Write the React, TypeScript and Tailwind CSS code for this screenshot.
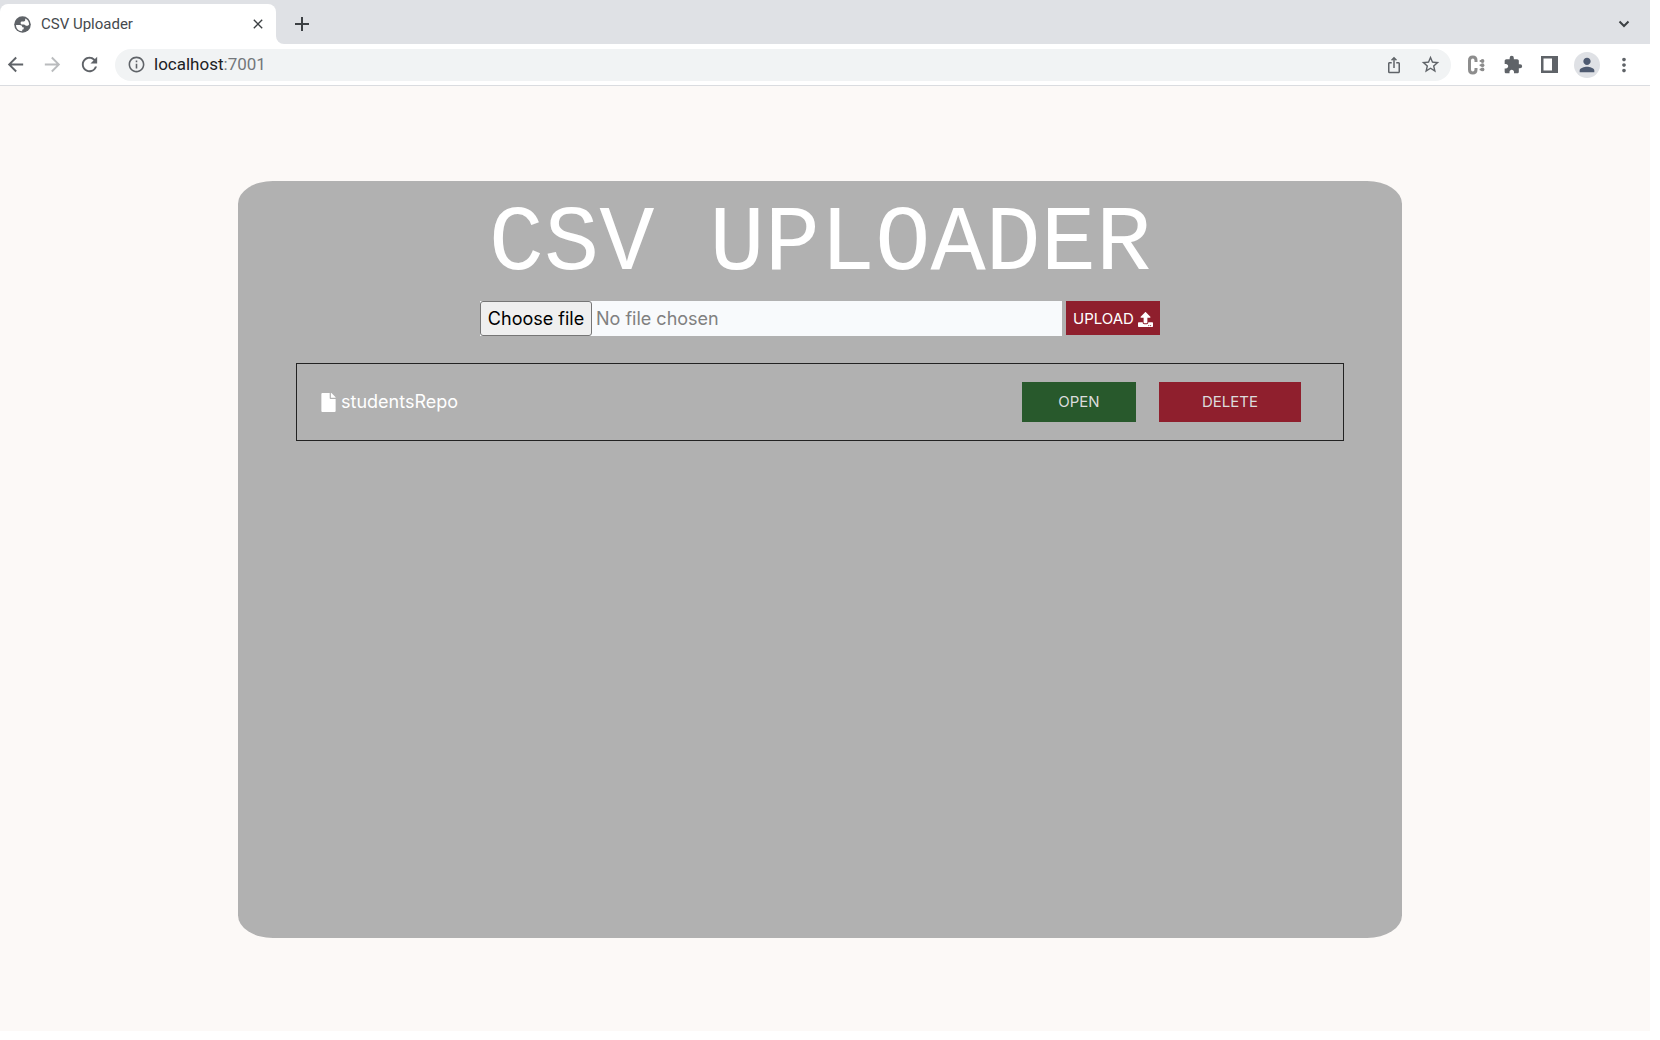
import React from "react";
import { MdClose, MdAdd, MdArrowBack, MdArrowForward, MdRefresh, MdInfoOutline, MdIosShare, MdStarOutline, MdExtension, MdPerson, MdMoreVert } from "react-icons/md";
import { FaUpload, FaFile } from "react-icons/fa";

function GlobeIcon() {
  return (
    <svg width="17" height="17" viewBox="0 0 17 17" aria-hidden="true">
      <circle cx="8.500" cy="8.500" r="8.300" fill="#5f6368" />
      <path d="M2 9h3.600c1.700 0 2.700.9 2.700 2.200h1.400v1.300c0 .8-.6 1.200-1.500 1.200v1.500C4.600 15.200 2 12.500 2 9z" fill="#fff" />
      <path d="M11.200 2.600c2.400 1 3.900 3.200 3.900 5.800-.5.900-1.300 1.400-2.300 1.400-1.400 0-1.700-1.400-3-1.400H8.100c-1 0-1.500-.7-1.500-1.500 0-.9.8-1.400 1.700-1.400h1.500c.9 0 1.400-.6 1.400-1.400z" fill="#fff" />
    </svg>
  );
}

function ColonIcon() {
  return (
    <svg width="18" height="20" viewBox="0 0 18 20" aria-hidden="true">
      <path d="M9 7V5.500C9 3 7.800 2 5.800 2S2.500 3 2.500 5.500v9c0 2.500 1.300 3.500 3.300 3.500S9 17 9 14.500V13" fill="none" stroke="#8d8d8d" strokeWidth="3" />
      <g fill="#8d8d8d">
        <circle cx="13.500" cy="6" r="1" />
        <circle cx="13.500" cy="10.200" r="1" />
        <circle cx="13.500" cy="14.400" r="1" />
        <circle cx="15.500" cy="6" r="1.900" />
        <circle cx="15.500" cy="10.200" r="1.900" />
        <circle cx="15.500" cy="14.400" r="1.900" />
      </g>
    </svg>
  );
}

function SidePanelIcon() {
  return (
    <svg width="17" height="17" viewBox="0 0 17 17" aria-hidden="true">
      <path fillRule="evenodd" d="M0 0h17v17H0zM2.500 2.500v12h8.500v-12z" fill="#5f6368" />
    </svg>
  );
}

function ChevronIcon() {
  return (
    <svg width="12" height="8" viewBox="0 0 12 8" aria-hidden="true">
      <path d="M1.500 1.500 6 6l4.500-4.500" fill="none" stroke="#3c4043" strokeWidth="2" />
    </svg>
  );
}

function ToolButton({ label, children }: { label: string; children: React.ReactNode }) {
  return (
    <button type="button" aria-label={label} className="flex w-[37px] items-center justify-center">
      {children}
    </button>
  );
}

function TabStrip() {
  return (
    <div className="flex h-11 bg-[#dfe1e5]">
      <div className="mt-1 flex w-[276px] items-center rounded-t-lg bg-white pr-2.5 pl-3.5">
        <GlobeIcon />
        <span className="ml-2.5 flex-1 font-['Roboto',sans-serif] text-[15px] text-[#45494d]">CSV Uploader</span>
        <button type="button" aria-label="Close tab" className="text-[#3c4043]">
          <MdClose size={16} />
        </button>
      </div>
      <div className="flex-1 bg-white">
        <div className="flex h-full items-center justify-between rounded-bl-lg bg-[#dfe1e5] pr-5 pl-3.5">
          <button type="button" aria-label="New tab" className="mt-1 text-[#3c4043]">
            <MdAdd size={24} />
          </button>
          <button type="button" aria-label="Search tabs" className="mt-1">
            <ChevronIcon />
          </button>
        </div>
      </div>
    </div>
  );
}

function Toolbar() {
  return (
    <div className="flex h-[42px] items-center border-b border-[#dadce0] bg-white pr-2 text-[#5f6368]">
      <div className="flex items-center gap-3.5 pl-1">
        <button type="button" aria-label="Back"><MdArrowBack size={23} /></button>
        <button type="button" aria-label="Forward" className="text-[#babcbe]"><MdArrowForward size={23} /></button>
        <button type="button" aria-label="Reload"><MdRefresh size={23} /></button>
      </div>
      <div className="ml-3.5 flex h-8 flex-1 items-center rounded-full bg-[#f1f3f4] pr-0.5 pl-3">
        <MdInfoOutline size={19} />
        <button type="button" className="ml-2 flex-1 text-left font-['Roboto',sans-serif] text-[17px] text-[#73777b]">
          <span className="text-[#202124]">localhost</span>:7001
        </button>
        <ToolButton label="Share"><MdIosShare size={18} /></ToolButton>
        <ToolButton label="Bookmark this page"><MdStarOutline size={21} /></ToolButton>
      </div>
      <div className="ml-1.5 flex items-center">
        <ToolButton label="Extension"><ColonIcon /></ToolButton>
        <ToolButton label="Extensions"><MdExtension size={20} /></ToolButton>
        <ToolButton label="Side panel"><SidePanelIcon /></ToolButton>
        <ToolButton label="Profile">
          <span className="flex size-[26px] items-center justify-center rounded-full bg-[#dfe1e5] text-[#4e5a70]">
            <MdPerson size={22} />
          </span>
        </ToolButton>
        <ToolButton label="Menu"><MdMoreVert size={22} /></ToolButton>
      </div>
    </div>
  );
}

function UploadForm() {
  return (
    <form className="mt-3 flex items-start gap-1" onSubmit={(e) => e.preventDefault()}>
      <label htmlFor="csv" className="relative flex h-[35px] w-[582px] items-center bg-[#f8fafc] text-lg">
        <input id="csv" type="file" accept=".csv" className="absolute inset-0 opacity-0" />
        <span className="flex h-full w-[112px] items-center justify-center rounded-[3px] border border-[#767676] bg-[#efefef] text-black">Choose file</span>
        <span className="ml-1 text-[#808080]">No file chosen</span>
      </label>
      <button type="submit" className="flex h-[34px] items-center gap-1 bg-[#8f1f2d] px-[7px] pt-0.5 text-[15px] text-white">
        UPLOAD <FaUpload size={15} />
      </button>
    </form>
  );
}

function FileRow({ name }: { name: string }) {
  return (
    <div className="flex h-[78px] w-[90%] items-center border border-[#222] pr-[42px] pl-[22px] text-white">
      <FaFile size={19} />
      <span className="ml-[3px] flex-1 text-lg">{name}</span>
      <button type="button" className="h-10 w-[114px] bg-[#28592c] text-[15px] text-[#dcdcdc]">OPEN</button>
      <button type="button" className="ml-[23px] h-10 w-[142px] bg-[#8f1f2d] text-[15px] text-[#dcdcdc]">DELETE</button>
    </div>
  );
}

export default function App() {
  return (
    <div className="min-h-screen bg-white pr-2.5 pb-2 font-['Inter',sans-serif]">
      <TabStrip />
      <Toolbar />
      <main className="flex min-h-[calc(100vh-95px)] justify-center bg-[#fcf9f7] pt-[95px] pr-2.5">
        <section className="flex h-[757px] w-[71%] flex-col items-center rounded-[3%] bg-[#b1b1b1] pt-5">
          <h1 className="font-['Liberation_Mono',monospace] text-[92px] leading-[88px] text-white">CSV UPLOADER</h1>
          <UploadForm />
          <div className="mt-[27px] flex w-full flex-col items-center">
            <FileRow name="studentsRepo" />
          </div>
        </section>
      </main>
    </div>
  );
}
